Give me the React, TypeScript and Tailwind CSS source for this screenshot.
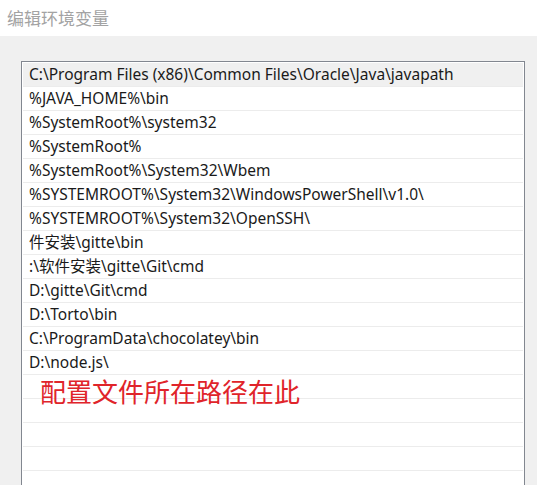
const paths = [
  "C:\\Program Files (x86)\\Common Files\\Oracle\\Java\\javapath",
  "%JAVA_HOME%\\bin",
  "%SystemRoot%\\system32",
  "%SystemRoot%",
  "%SystemRoot%\\System32\\Wbem",
  "%SYSTEMROOT%\\System32\\WindowsPowerShell\\v1.0\\",
  "%SYSTEMROOT%\\System32\\OpenSSH\\",
  "件安装\\gitte\\bin",
  ":\\软件安装\\gitte\\Git\\cmd",
  "D:\\gitte\\Git\\cmd",
  "D:\\Torto\\bin",
  "C:\\ProgramData\\chocolatey\\bin",
  "D:\\node.js\\",
  "",
  "",
  "",
  "",
];

const App = () => {
  return (
    <div
      className="w-[537px] h-[485px] overflow-hidden bg-[#f0f0f0]"
      style={{ fontFamily: '"Noto Sans", "Noto Sans CJK SC", sans-serif' }}
    >
      <div className="h-[36px] bg-white flex items-center pl-[7px]">
        <span className="text-[17px] text-[#a3a3a3] leading-none">编辑环境变量</span>
      </div>
      <div className="pt-[25px] pl-[21px] pr-[12px]">
        <div className="relative border border-[#828790] bg-white p-px h-[460px]">
          {paths.map((p, i) => (
            <div
              key={i}
              className={`h-[24px] border-b border-[#ececec] flex items-center pl-[6px] text-[15.5px] text-[#1a1a1a] whitespace-nowrap ${
                i === 0 ? "bg-[#f0f0f0]" : ""
              }`}
            >
              {p}
            </div>
          ))}
          <div className="absolute left-[18px] top-[317px] text-[26px] leading-none text-[#e0242a]">
            配置文件所在路径在此
          </div>
        </div>
      </div>
    </div>
  );
};

export default App;
